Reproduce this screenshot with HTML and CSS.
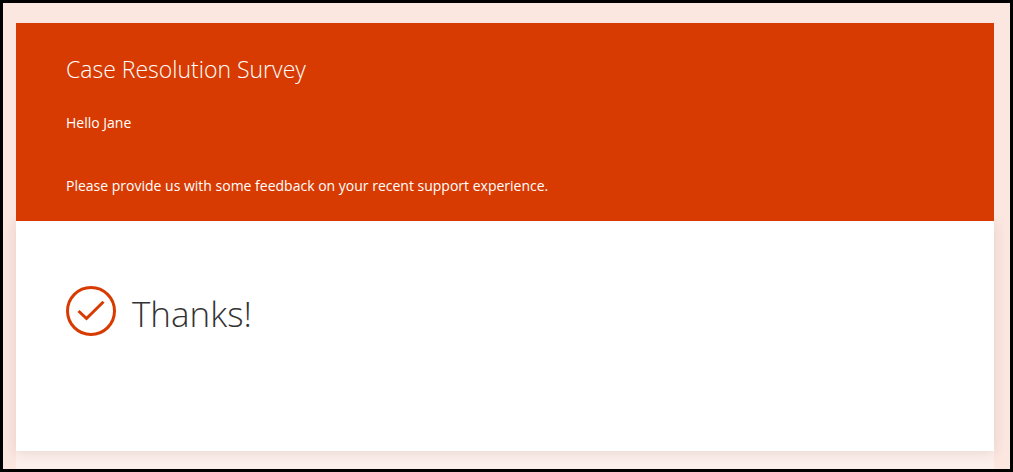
FILE: index.html
```html
<!DOCTYPE html>
<html lang="en">
<head>
<meta charset="utf-8">
<meta name="viewport" content="width=device-width, initial-scale=1">
<title>Case Resolution Survey</title>
<link rel="stylesheet" href="styles.css">
</head>
<body class="page">
<main class="survey">
  <header class="survey-header">
    <h1 class="survey-title">Case Resolution Survey</h1>
    <p class="survey-text">Hello Jane</p>
    <p class="survey-text">Please provide us with some feedback on your recent support experience.</p>
  </header>
  <section class="survey-body">
    <svg class="check-icon" viewBox="0 0 50 50" aria-hidden="true">
      <circle cx="25" cy="25" r="23.5"/>
      <path d="M12.5 25 20.5 32.5 37.5 15.8"/>
    </svg>
    <h2 class="thanks">Thanks!</h2>
  </section>
</main>
</body>
</html>
```
FILE: styles.css
```css
* {
  box-sizing: border-box;
}

.page {
  display: flex;
  flex-direction: column;
  min-height: 100vh;
  margin: 0;
  padding: 20px 16px 0 13px;
  border: 3px solid #000;
  background: #fbe7e0;
  font-family: "Open Sans", "Noto Sans", sans-serif;
}

.survey {
  flex: 1;
  padding-bottom: 18px;
  background: #fcf0ec;
}

.survey-header {
  position: relative;
  padding: 28px 50px 24px;
  background: #d83b01;
  color: #fff;
}

.survey-title {
  margin: 0 0 24px;
  font-size: 23px;
  font-weight: 300;
  line-height: 36px;
}

.survey-text {
  margin: 0;
  font-size: 14px;
  line-height: 23px;
}

.survey-text + .survey-text {
  margin-top: 40px;
}

.survey-body {
  display: flex;
  align-items: flex-start;
  gap: 16px;
  min-height: 230px;
  padding: 65px 50px;
  background: #fff;
  box-shadow: 0 2px 12px rgba(90, 30, 10, 0.12);
}

.check-icon {
  flex: none;
  width: 50px;
  height: 50px;
  fill: none;
  stroke: #d83b01;
  stroke-width: 3;
}

.thanks {
  margin: 0;
  color: #333;
  font-size: 35px;
  font-weight: 300;
  line-height: 56px;
}
```
